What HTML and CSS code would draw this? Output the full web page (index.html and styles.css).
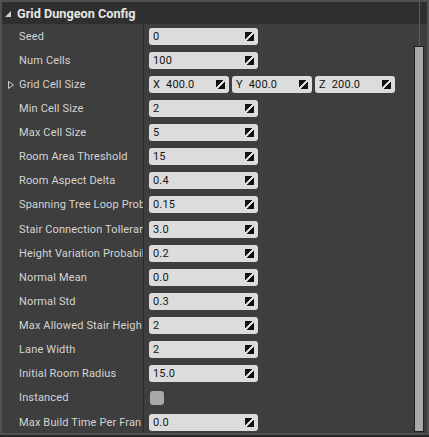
FILE: index.html
```html
<!DOCTYPE html>
<html>
<head>
<meta charset="utf-8">
<link rel="stylesheet" href="styles.css">
</head>
<body>
<div class="panel">
  <div class="header">
    <svg class="collapse" width="6" height="6" viewBox="0 0 6 6"><polygon points="6,0 6,6 0,6" fill="#cfcfcf"/></svg>
    <span class="title">Grid Dungeon Config</span>
  </div>
  <div class="body">
    <div class="rows">
      <div class="row"><div class="label">Seed</div><div class="value"><div class="field"><span>0</span><i class="spin"></i></div></div></div>
      <div class="row"><div class="label">Num Cells</div><div class="value"><div class="field"><span>100</span><i class="spin"></i></div></div></div>
      <div class="row"><div class="label"><svg class="expand" width="6" height="8" viewBox="0 0 6 8"><polygon points="0.5,0.5 5.5,4 0.5,7.5" fill="none" stroke="#cfcfcf" stroke-width="1"/></svg>Grid Cell Size</div><div class="value vec">
        <div class="field small"><span><b>X</b>400.0</span><i class="spin"></i></div>
        <div class="field small"><span><b>Y</b>400.0</span><i class="spin"></i></div>
        <div class="field small"><span><b>Z</b>200.0</span><i class="spin"></i></div>
      </div></div>
      <div class="row"><div class="label">Min Cell Size</div><div class="value"><div class="field"><span>2</span><i class="spin"></i></div></div></div>
      <div class="row"><div class="label">Max Cell Size</div><div class="value"><div class="field"><span>5</span><i class="spin"></i></div></div></div>
      <div class="row"><div class="label">Room Area Threshold</div><div class="value"><div class="field"><span>15</span><i class="spin"></i></div></div></div>
      <div class="row"><div class="label">Room Aspect Delta</div><div class="value"><div class="field"><span>0.4</span><i class="spin"></i></div></div></div>
      <div class="row"><div class="label">Spanning Tree Loop Prob</div><div class="value"><div class="field"><span>0.15</span><i class="spin"></i></div></div></div>
      <div class="row"><div class="label">Stair Connection Tollerar</div><div class="value"><div class="field"><span>3.0</span><i class="spin"></i></div></div></div>
      <div class="row"><div class="label">Height Variation Probabil</div><div class="value"><div class="field"><span>0.2</span><i class="spin"></i></div></div></div>
      <div class="row"><div class="label">Normal Mean</div><div class="value"><div class="field"><span>0.0</span><i class="spin"></i></div></div></div>
      <div class="row"><div class="label">Normal Std</div><div class="value"><div class="field"><span>0.3</span><i class="spin"></i></div></div></div>
      <div class="row"><div class="label">Max Allowed Stair Heigh</div><div class="value"><div class="field"><span>2</span><i class="spin"></i></div></div></div>
      <div class="row"><div class="label">Lane Width</div><div class="value"><div class="field"><span>2</span><i class="spin"></i></div></div></div>
      <div class="row"><div class="label">Initial Room Radius</div><div class="value"><div class="field"><span>15.0</span><i class="spin"></i></div></div></div>
      <div class="row"><div class="label">Instanced</div><div class="value"><div class="check"></div></div></div>
      <div class="row"><div class="label">Max Build Time Per Fran</div><div class="value"><div class="field"><span>0.0</span><i class="spin"></i></div></div></div>
    </div>
    <div class="scroll"><div class="thumb"></div></div>
  </div>
</div>
</body>
</html>
```
FILE: styles.css
```css
html, body {
  margin: 0;
  padding: 0;
  background: #262626;
}
body {
  width: 429px;
  height: 437px;
  overflow: hidden;
  font-family: Roboto, "Noto Sans", sans-serif;
  font-size: 11px;
  letter-spacing: 0.15px;
}
.panel {
  box-sizing: border-box;
  width: 429px;
  height: 435px;
  border: 2px solid #505050;
  background: #3e3e3e;
  display: flex;
  flex-direction: column;
}
.header {
  height: 22px;
  background: #2f2f2f;
  display: flex;
  align-items: center;
  padding-left: 3px;
  flex: none;
}
.collapse {
  margin-right: 6px;
  margin-top: 1px;
}
.title {
  color: #e6e6e6;
  font-weight: bold;
  font-size: 12.7px;
  letter-spacing: 0;
}
.body {
  flex: 1;
  display: flex;
  min-height: 0;
}
.rows {
  flex: 1;
  display: flex;
  flex-direction: column;
  background: linear-gradient(to right, transparent 141px, #2b2b2b 141px, #2b2b2b 142px, transparent 142px);
}
.row {
  height: 24.125px;
  display: flex;
  align-items: center;
  flex: none;
}
.label {
  width: 141px;
  flex: none;
  box-sizing: border-box;
  padding-left: 17px;
  color: #d4d4d4;
  white-space: nowrap;
  overflow: hidden;
  position: relative;
}
.expand {
  position: absolute;
  left: 6px;
  top: 3px;
}
.value {
  margin-left: 6px;
  display: flex;
  gap: 3px;
}
.field {
  width: 109px;
  height: 17px;
  box-sizing: border-box;
  background: #dcdcdc;
  border-radius: 3px;
  display: flex;
  align-items: center;
  justify-content: space-between;
  padding: 0 4px;
  color: #151515;
}
.field.small {
  width: 80px;
}
.field b {
  font-weight: normal;
  margin-right: 6px;
}
.spin {
  width: 9px;
  height: 9px;
  background: linear-gradient(135deg, #111 0 40%, #dcdcdc 40% 60%, #111 60% 100%);
  flex: none;
}
.check {
  width: 14px;
  height: 14px;
  background: #a9a9a9;
  border-radius: 3px;
  margin-left: 1px;
}
.scroll {
  width: 12px;
  flex: none;
  position: relative;
  margin-right: 1px;
}
.scroll::before {
  content: "";
  position: absolute;
  left: 5px;
  top: -22px;
  width: 1px;
  height: 44px;
  background: #5a5a5a;
}
.thumb {
  position: absolute;
  left: 0;
  top: 22px;
  bottom: 1px;
  width: 10px;
  background: #a9a9a9;
  border: 1px solid #222;
  box-sizing: border-box;
}
```
